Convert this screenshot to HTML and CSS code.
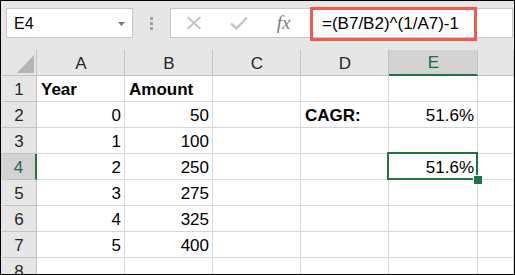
FILE: index.html
```html
<!DOCTYPE html>
<html lang="en">

<head>
    <meta charset="UTF-8">
    <title>CAGR</title>
    <link rel="stylesheet" href="styles.css">
</head>

<body>
    <div class="sheet">
        <div class="formula-bar">
            <div class="name-box">
                <span>E4</span>
                <svg class="caret" width="7" height="4" viewBox="0 0 7 4"><path d="M0 0h7L3.5 4z" fill="#777"/></svg>
            </div>
            <div class="grip"><i></i><i></i><i></i></div>
            <div class="formula-box">
                <span class="fb-btn">
                    <svg width="16" height="14" viewBox="0 0 16 14"><path d="M1.5 1L14.5 13M14.5 1L1.5 13" stroke="#c4c4c4" stroke-width="2" fill="none"/></svg>
                </span>
                <span class="fb-btn">
                    <svg width="18" height="14" viewBox="0 0 18 14"><path d="M1 7.5L6.5 12.5L17 1.5" stroke="#c4c4c4" stroke-width="2.4" fill="none"/></svg>
                </span>
                <span class="fb-btn fx">fx</span>
                <div class="formula">=(B7/B2)^(1/A7)-1</div>
                <div class="mark"></div>
            </div>
        </div>
        <div class="grid">
            <div class="cell head corner">
                <svg width="17" height="18" viewBox="0 0 17 18"><path d="M17 0V18H0z" fill="#b5b5b5"/></svg>
            </div>
            <div class="cell head">A</div>
            <div class="cell head">B</div>
            <div class="cell head">C</div>
            <div class="cell head">D</div>
            <div class="cell head sel col-sel">E</div>
            <div class="cell head"></div>

            <div class="cell head">1</div>
            <div class="cell bold">Year</div>
            <div class="cell bold">Amount</div>
            <div class="cell"></div>
            <div class="cell"></div>
            <div class="cell"></div>
            <div class="cell"></div>

            <div class="cell head">2</div>
            <div class="cell num">0</div>
            <div class="cell num">50</div>
            <div class="cell"></div>
            <div class="cell bold">CAGR:</div>
            <div class="cell num">51.6%</div>
            <div class="cell"></div>

            <div class="cell head">3</div>
            <div class="cell num">1</div>
            <div class="cell num">100</div>
            <div class="cell"></div>
            <div class="cell"></div>
            <div class="cell"></div>
            <div class="cell"></div>

            <div class="cell head sel row-sel">4</div>
            <div class="cell num">2</div>
            <div class="cell num">250</div>
            <div class="cell"></div>
            <div class="cell"></div>
            <div class="cell num active">51.6%</div>
            <div class="cell"></div>

            <div class="cell head">5</div>
            <div class="cell num">3</div>
            <div class="cell num">275</div>
            <div class="cell"></div>
            <div class="cell"></div>
            <div class="cell"></div>
            <div class="cell"></div>

            <div class="cell head">6</div>
            <div class="cell num">4</div>
            <div class="cell num">325</div>
            <div class="cell"></div>
            <div class="cell"></div>
            <div class="cell"></div>
            <div class="cell"></div>

            <div class="cell head">7</div>
            <div class="cell num">5</div>
            <div class="cell num">400</div>
            <div class="cell"></div>
            <div class="cell"></div>
            <div class="cell"></div>
            <div class="cell"></div>

            <div class="cell head">8</div>
            <div class="cell"></div>
            <div class="cell"></div>
            <div class="cell"></div>
            <div class="cell"></div>
            <div class="cell"></div>
            <div class="cell"></div>
        </div>
    </div>
</body>

</html>
```

FILE: styles.css
```css
* {
    box-sizing: border-box;
}

body {
    margin: 0;
    font-family: "Liberation Sans", Arial, sans-serif;
    color: #000;
}

.sheet {
    width: 515px;
    height: 275px;
    border: 1px solid #000;
    background: #fff;
    overflow: hidden;
    display: flex;
    flex-direction: column;
}

/* formula bar */
.formula-bar {
    flex: none;
    height: 49px;
    display: flex;
    align-items: flex-start;
    padding: 7px 1px 0 5px;
    background: #e6e6e6;
}

.name-box {
    width: 127px;
    height: 30px;
    display: flex;
    align-items: center;
    justify-content: space-between;
    padding: 1px 7px 0 7px;
    background: #fff;
    border: 1px solid #c6c6c6;
    font-size: 16px;
}

.grip {
    width: 37px;
    display: flex;
    flex-direction: column;
    align-items: center;
    gap: 2px;
    padding-top: 9px;
}

.grip i {
    width: 3px;
    height: 3px;
    background: #a3a3a3;
}

.formula-box {
    position: relative;
    flex: 1;
    height: 30px;
    display: flex;
    align-items: center;
    background: #fff;
    border: 1px solid #c6c6c6;
}

.fb-btn {
    width: 45px;
    display: flex;
    justify-content: center;
    align-items: center;
}

.fb-btn svg {
    display: block;
}

.fx {
    font-family: "Liberation Serif", "Times New Roman", serif;
    font-style: italic;
    font-size: 19px;
    color: #7a7a7a;
    padding-bottom: 1px;
}

.formula {
    padding: 1px 0 0 16px;
    font-size: 17px;
    white-space: nowrap;
}

.mark {
    position: absolute;
    left: 139px;
    top: -2px;
    width: 167px;
    height: 34px;
    border: 3px solid #f25a4f;
}

/* grid */
.grid {
    flex: 1;
    display: grid;
    grid-template-columns: 36px 88px 88px 88px 88px 89px 1fr;
    grid-auto-rows: 26px;
}

.cell {
    display: flex;
    align-items: flex-end;
    padding: 0 3px 1px 4px;
    border-right: 1px solid #d6d6d6;
    border-bottom: 1px solid #d6d6d6;
    font-size: 17px;
    line-height: 20px;
    white-space: nowrap;
    overflow: hidden;
}

.bold {
    font-weight: bold;
}

.num {
    justify-content: flex-end;
}

.head {
    justify-content: center;
    background: #e6e6e6;
    border-color: #c3c3c3;
    color: #262626;
}

.corner {
    justify-content: flex-end;
    padding: 0 2px 2px 0;
}

.head.sel {
    background: #d3d3d3;
    color: #1e6b41;
}

.col-sel {
    border-bottom: 2px solid #217346;
}

.row-sel {
    border-right: 2px solid #217346;
}

.active {
    position: relative;
    overflow: visible;
}

.active::before {
    content: "";
    position: absolute;
    left: -2px;
    top: -2px;
    right: -1px;
    bottom: -1px;
    border: 2px solid #217346;
}

.active::after {
    content: "";
    position: absolute;
    left: 84px;
    top: 21px;
    width: 8px;
    height: 8px;
    background: #217346;
    border: 1px solid #fff;
}
```
